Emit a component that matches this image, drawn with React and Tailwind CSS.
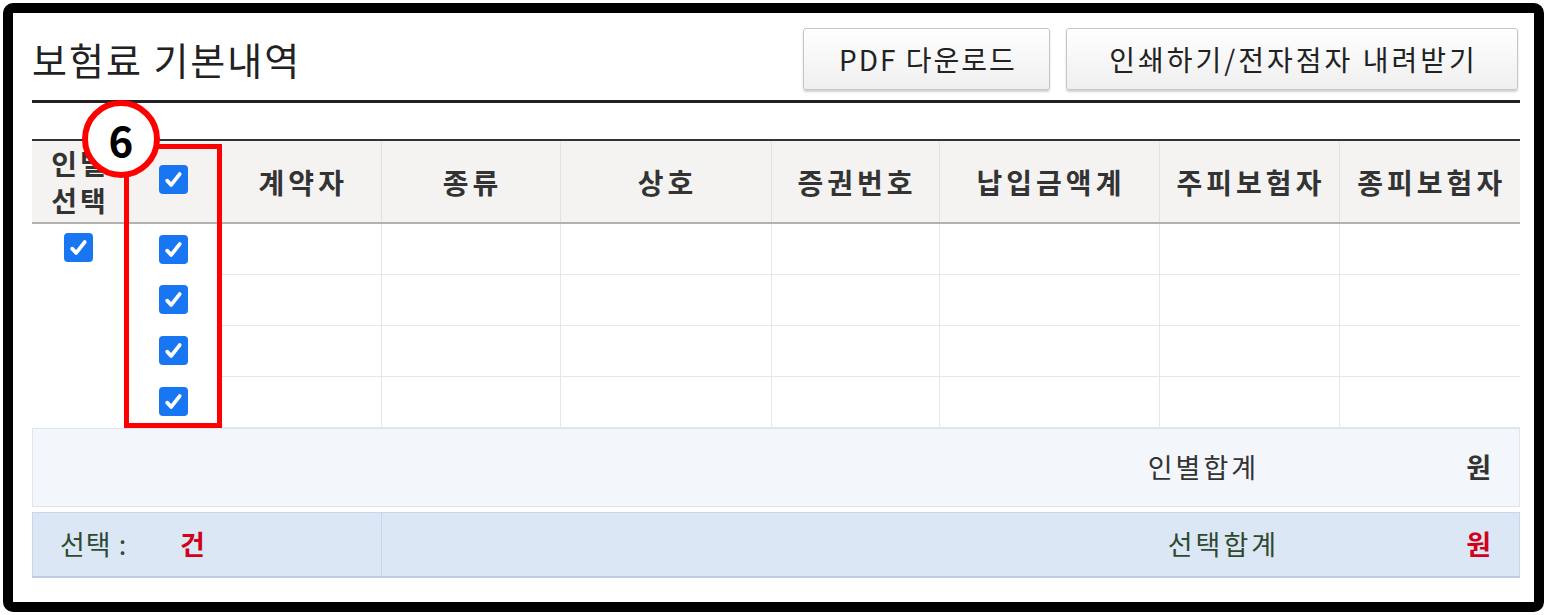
import React from 'react';

const FONT = { fontFamily: '"Noto Sans CJK KR", "Noto Sans", sans-serif' };

const Check = () => (
  <span className="inline-flex h-[29px] w-[29px] items-center justify-center rounded-[4px] bg-[#1976f2] align-middle">
    <svg viewBox="0 0 16 16" className="h-[23px] w-[23px]" fill="none" stroke="white" strokeWidth="2.6" strokeLinecap="round" strokeLinejoin="round">
      <path d="M3.6 8.8l2.8 3 5.9-7.6" />
    </svg>
  </span>
);

const headers = ['계약자', '종류', '상호', '증권번호', '납입금액계', '주피보험자', '종피보험자'];

const App = () => {
  const rows = [0, 1, 2, 3];

  return (
    <div className="h-[615px] w-[1547px] bg-white p-[3px]" style={FONT}>
      <div className="h-full rounded-[10px] border-[10px] border-black bg-white pl-[19px] pr-[14px] pt-[15px]">
        {/* title bar */}
        <div className="flex h-[62px] items-center justify-between">
          <h1 className="text-[38px] font-normal leading-none tracking-[2px] text-[#222]">보험료 기본내역</h1>
          <div className="mr-[2px] flex gap-[16px]">
            <button className="h-[62px] w-[247px] rounded-[3px] border border-[#c6c6c6] bg-gradient-to-b from-white to-[#efefef] pl-[3px] text-[28px] tracking-[2px] text-[#222] shadow-[0_2px_2px_rgba(0,0,0,0.18)]">
              PDF 다운로드
            </button>
            <button className="h-[62px] w-[452px] rounded-[3px] border border-[#c6c6c6] bg-gradient-to-b from-white to-[#efefef] pl-[3px] text-[28px] tracking-[3px] text-[#222] shadow-[0_2px_2px_rgba(0,0,0,0.18)]">
              인쇄하기/전자점자 내려받기
            </button>
          </div>
        </div>
        <div className="mt-[10px] h-[3px] bg-[#222]" />

        {/* table */}
        <div className="relative mt-[36px]">
          <table className="w-full table-fixed border-collapse">
            <colgroup>
              <col className="w-[93px]" />
              <col className="w-[97px]" />
              <col className="w-[159px]" />
              <col className="w-[179px]" />
              <col className="w-[211px]" />
              <col className="w-[168px]" />
              <col className="w-[220px]" />
              <col className="w-[180px]" />
              <col className="w-[181px]" />
            </colgroup>
            <thead>
              <tr className="h-[83px] border-t-2 border-b-2 border-t-[#333] border-b-[#b2b2b2] bg-[#f4f3f2]">
                <th className="pl-[3px] text-[28px] font-bold leading-[37px] tracking-[3px] text-[#333]">
                  인별
                  <br />
                  선택
                </th>
                <th className="pb-[4px] text-center">
                  <Check />
                </th>
                {headers.map((h, i) => (
                  <th
                    key={h}
                    className={`pl-[4px] text-center text-[28px] font-bold tracking-[4px] text-[#333] ${i > 0 ? 'border-l border-l-[#e2e2e2]' : ''}`}
                  >
                    {h}
                  </th>
                ))}
              </tr>
            </thead>
            <tbody>
              {rows.map((r) => (
                <tr key={r} className="h-[51px]">
                  {r === 0 && (
                    <td rowSpan={4} className="pt-[9px] text-center align-top">
                      <Check />
                    </td>
                  )}
                  <td className="text-center">
                    <Check />
                  </td>
                  {headers.map((h, i) => (
                    <td
                      key={h}
                      className={`border-b border-b-[#e6e6e6] ${i > 0 ? 'border-l border-l-[#e6e6e6]' : ''}`}
                    />
                  ))}
                </tr>
              ))}
            </tbody>
          </table>

          {/* summary rows */}
          <div className="flex h-[79px] items-center justify-end border border-[#dfe5ec] bg-[#f3f6fa] pr-[28px] text-[27px] text-[#333]">
            <span className="mr-[207px] tracking-[3px]">인별합계</span>
            <span className="font-bold">원</span>
          </div>
          <div className="mt-[5px] flex h-[66px] border border-[#c7d6ea] border-b-2 border-b-[#bccde3] bg-[#dce7f6] text-[27px]">
            <div className="flex w-[349px] items-center border-r border-r-[#c7d6ea] pl-[27px] text-[#2f4a30]">
              <span className="w-[120px] tracking-[1px]">선택 :</span>
              <span className="font-bold text-[#d0021b]">건</span>
            </div>
            <div className="flex flex-1 items-center justify-end pr-[28px]">
              <span className="mr-[187px] tracking-[3px] text-[#2f4a30]">선택합계</span>
              <span className="font-bold text-[#d0021b]">원</span>
            </div>
          </div>

          {/* annotation overlay */}
          <div className="pointer-events-none absolute left-[92px] top-[5px] h-[284px] w-[98px] border-[5px] border-[#ff0000]" />
          <div className="absolute left-[50px] top-[-39px] flex h-[78px] w-[78px] items-center justify-center rounded-full border-[6px] border-[#ff0000] bg-white text-[42px] font-bold leading-none text-black">
            6
          </div>
        </div>
      </div>
    </div>
  );
};

export default App;
